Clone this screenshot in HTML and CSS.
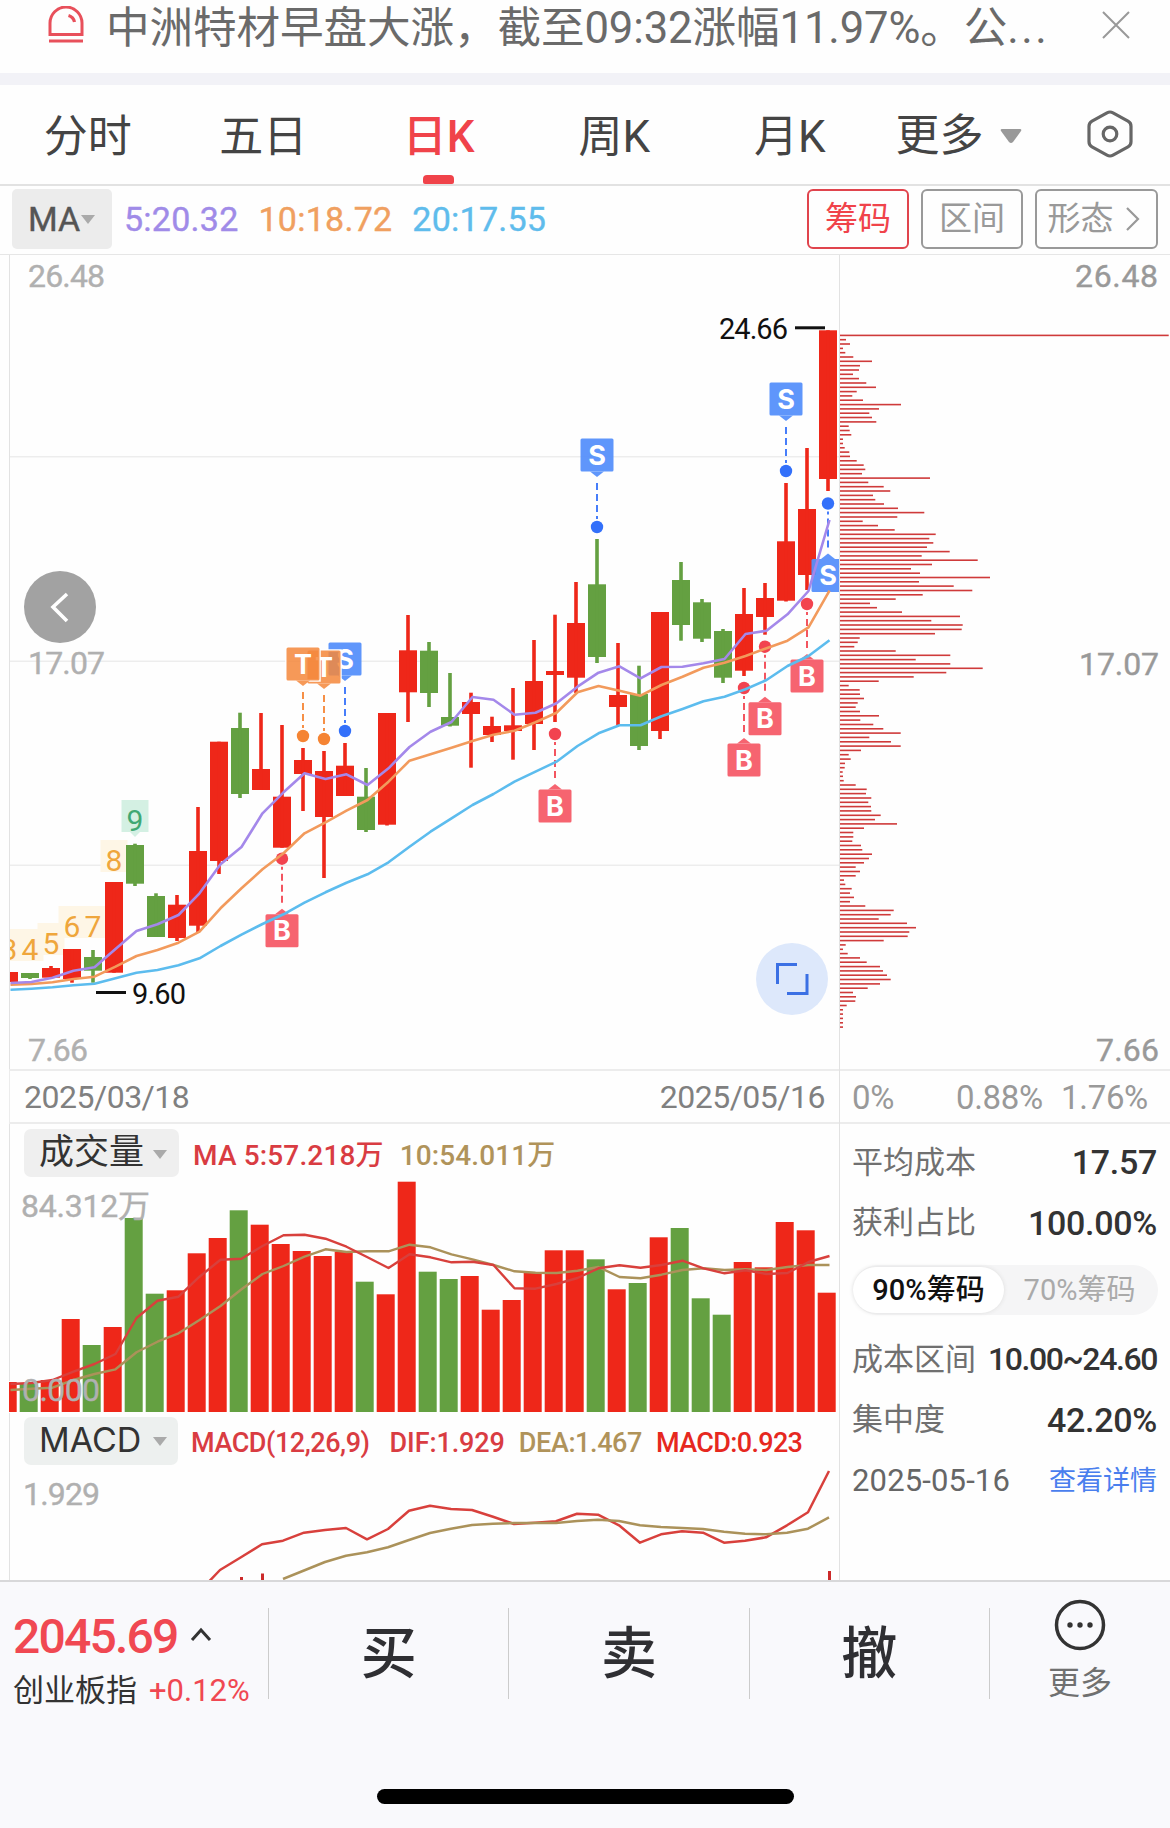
FILE: index.html
```html
<!DOCTYPE html>
<html lang="zh-CN">
<head>
	<meta charset="utf-8">
	<title>日K</title>
	<link rel="stylesheet" href="styles.css">
</head>
<body>
	<div class="news">
		<svg class="bell" width="36" height="38" viewBox="0 0 36 38">
			<path d="M2 28.5V17a16 16 0 0 1 32 0v11.5z"/>
			<path d="M20.5 9.5q5 1.500 6 6.500" stroke-width="3.200"/>
			<path d="M1 35h34"/>
		</svg>
		<p>中洲特材早盘大涨，截至09:32涨幅11.97%。公<span class="dots">...</span></p>
		<svg class="close" width="28" height="28" viewBox="0 0 28 28"><path d="M1 1l26 26M27 1L1 27"/></svg>
	</div>

	<nav class="tabs">
		<a>分时</a>
		<a>五日</a>
		<a class="active">日K</a>
		<a>周K</a>
		<a>月K</a>
		<a class="more">更多<svg width="22" height="16" viewBox="0 0 22 16"><path d="M2 1h18q2 0 1 2l-8 11q-2 2-4 0L1 3q-1-2 1-2z"/></svg></a>
		<svg class="gear" width="46" height="48" viewBox="0 0 46 48">
			<path d="M20 2.800q3-1.600 6 0l15 8.400q3 1.600 3 5v15.600q0 3.400-3 5l-15 8.400q-3 1.600-6 0l-15-8.400q-3-1.600-3-5V16.200q0-3.400 3-5z"/>
			<circle cx="23" cy="24" r="6.800"/>
		</svg>
	</nav>

	<div class="mabar">
		<div class="pill small">MA<i class="tri"></i></div>
		<span class="ma5">5:20.32</span>
		<span class="ma10">10:18.72</span>
		<span class="ma20">20:17.55</span>
		<div class="buttons">
			<a class="btn on">筹码</a>
			<a class="btn">区间</a>
			<a class="btn wide">形态<svg width="14" height="24" viewBox="0 0 14 24"><path d="M1 1l11 11L1 23"/></svg></a>
		</div>
	</div>

	<main class="board">
		<section class="left">
			<svg id="kline" width="839" height="815" viewBox="0 254 839 815"></svg>
			<div class="dates"><span>2025/03/18</span><span>2025/05/16</span></div>
			<div class="legend">
				<div class="pill">成交量<i class="tri"></i></div>
				<span class="red">MA 5:57.218万</span>
				<span class="gold">10:54.011万</span>
			</div>
			<svg id="volume" width="839" height="236" viewBox="0 1177 839 236"></svg>
			<div class="legend macd">
				<div class="pill latin">MACD<i class="tri"></i></div>
				<span class="red">MACD(12,26,9)</span>
				<span class="red dif">DIF:1.929</span>
				<span class="gold dea">DEA:1.467</span>
				<span class="bright">MACD:0.923</span>
			</div>
			<svg id="macd" width="839" height="115" viewBox="0 1465 839 115"></svg>
		</section>
		<section class="right">
			<svg id="chips" width="330" height="815" viewBox="840 254 330 815"></svg>
			<div class="percent"><span>0%</span><span>0.88%</span><span>1.76%</span></div>
			<div class="row first"><label>平均成本</label><b>17.57</b></div>
			<div class="row"><label>获利占比</label><b>100.00%</b></div>
			<div class="switch"><span class="on">90%筹码</span><span>70%筹码</span></div>
			<div class="row"><label>成本区间</label><b class="range">10.00~24.60</b></div>
			<div class="row"><label>集中度</label><b>42.20%</b></div>
			<div class="row"><span class="day">2025-05-16</span><a>查看详情</a></div>
		</section>
	</main>

	<footer class="bottom">
		<div class="actions">
			<div class="index">
				<div class="value">2045.69<svg width="22" height="15" viewBox="0 0 22 15"><path d="M2 13l9-10 9 10"/></svg></div>
				<div class="name">创业板指<em>+0.12%</em></div>
			</div>
			<div class="act">买</div>
			<div class="act">卖</div>
			<div class="act">撤</div>
			<div class="other">
				<svg width="52" height="52" viewBox="0 0 52 52">
					<circle class="ring" cx="26" cy="26" r="23.500"/>
					<circle cx="16" cy="26" r="2.700"/><circle cx="26" cy="26" r="2.700"/><circle cx="36" cy="26" r="2.700"/>
				</svg>
				<span>更多</span>
			</div>
		</div>
		<div class="home"></div>
	</footer>
	<script src="chart.js"></script>
</body>
</html>
```
FILE: styles.css
```css
* {box-sizing: border-box;}
body {margin: 0; width: 1170px; height: 1828px; overflow: hidden; background: #fefefe; color: #333; font-family: Roboto, "Noto Sans CJK SC", sans-serif;}
svg {display: block; flex: none;}
p {margin: 0;}

/* news */
.news {height: 85px; border-bottom: 12px solid #f2f2f7; display: flex; align-items: flex-start; padding-left: 48px;}
.news p {margin: 2px 0 0 22px; width: 957px; font-size: 43.600px; line-height: 54px; color: #6a6a6a; white-space: nowrap; letter-spacing: -.100px;}
.dots {letter-spacing: 2.500px;}
.bell {margin-top: 6px; fill: none; stroke: #e8505b; stroke-width: 3;}
.close {margin: 11px 0 0 39px; fill: none; stroke: #999; stroke-width: 2;}

/* tabs */
.tabs {height: 101px; border-bottom: 2px solid #e2e2e2; display: flex;}
.tabs a {width: 175.500px; height: 99px; text-align: center; font-size: 44px; line-height: 104px; color: #444; position: relative;}
.tabs a.active {color: #f0434a; font-weight: 500;}
.tabs a.active:after {content: ""; position: absolute; left: 72px; bottom: 0; width: 31px; height: 9px; border-radius: 4px 4px 2px 2px; background: #f0434a;}
.tabs a.more {width: 209px; padding: 2px 0 0 18px; display: flex; align-items: center; text-align: left;}
.more svg {margin: 1px 0 0 16px; fill: #999;}
.gear {margin-top: 25px; fill: none; stroke: #666; stroke-width: 3.200;}

/* average line bar */
.mabar {height: 68px; display: flex; align-items: center; padding: 0 12px 2px;}
.mabar > span {font-size: 34px; letter-spacing: .250px; margin-right: 20px; white-space: nowrap; -webkit-text-stroke: .400px;}
.pill {width: 155px; height: 48px; padding-left: 15px; background: #efefef; border-radius: 7px; font-size: 35px; line-height: 42px; display: flex; align-items: center; flex: none;}
.pill.small {width: 100px; height: 60px; background: #ececec; margin-right: 12px; padding-left: 16px; font-size: 34px; color: #555; border-radius: 5px; -webkit-text-stroke: .400px;}
.tri {border: 7.500px solid transparent; border-top: 9px solid #aaa; border-bottom: 0; margin-left: 9px;}
.small .tri {margin-left: 1px;}
.ma5 {color: #a08be8;}
.ma10 {color: #f0a060;}
.ma20 {color: #5fbcec;}
.buttons {margin-left: auto; display: flex; gap: 12px;}
.btn {width: 102px; height: 60px; border: 2px solid #999; border-radius: 6px; color: #999; font-size: 33px; line-height: 50px; display: flex; align-items: center; justify-content: center;}
.btn.on {border-color: #e0444d; color: #f0434a;}
.btn.wide {width: 123px; gap: 12px; padding-right: 6px;}
.btn svg {fill: none; stroke: #999; stroke-width: 2.200;}

/* charts */
.board {display: flex; height: 1326px; border-top: 1px solid #e6e6e6; overflow: hidden;}
.left {width: 840px; border-right: 1px solid #e2e2e2; height: 1326px; flex: none;}
.right {width: 330px;}
#kline, #chips {margin-top: -1px;}
.dates {height: 55px; margin-left: 9px; border: 2px solid #ececec; border-width: 2px 0 2px 1px; padding: 0 14px; display: flex; align-items: center; justify-content: space-between; font-size: 32px; letter-spacing: -.500px; color: #808080;}
.percent {height: 55px; border-top: 2px solid #ececec; border-bottom: 2px solid #ececec; padding: 1px 22px 0 12px; display: flex; align-items: center; font-size: 33px; letter-spacing: -.300px; color: #999;}
.percent span:nth-child(2) {margin-left: auto; margin-right: 18px;}
.legend {height: 53px; margin-left: 9px; border-left: 1px solid #e2e2e2; display: flex; align-items: center; padding: 4px 0 0 14px; font-size: 28px; font-weight: 500; white-space: nowrap;}
.legend .pill {margin-right: 14px; font-weight: 400;}
.legend .tri {margin-top: 3px;}
.legend .latin {font: 34px Inter, sans-serif; background: #edf0ef; padding: 0 0 2px 15px; color: #333;}
.latin .tri {margin-left: 12px;}
.red {color: #d93c42; margin-right: 16px; letter-spacing: .150px;}
.gold {color: #b0935a; letter-spacing: .100px;}
.macd {height: 52px; padding-top: 3px; font-size: 27px;}
.macd span {margin-top: 4px;}
.macd .latin {margin-right: 13px; width: 154px;}
.macd .red {letter-spacing: -.450px; margin-right: 20px;}
.macd .red.dif {margin-right: 14px; letter-spacing: -.100px;}
.macd .dea {margin-right: 14px; letter-spacing: -.400px;}
.bright {color: #e6281f; letter-spacing: -.650px;}

/* cost panel */
.row {height: 60.500px; padding: 0 13px 0 12px; display: flex; align-items: center; justify-content: space-between;}
.row.first {margin-top: 8px;}
.row label {font-size: 31px; color: #707070; white-space: nowrap; margin-top: -6px;}
.row b {font-size: 34px; font-weight: 500; letter-spacing: -.300px; color: #333;}
.row b.range {letter-spacing: -1.400px; font-size: 32px;}
.row .day {font-size: 31px; color: #666; letter-spacing: .150px; margin-top: 0;}
.row a {font-size: 27px; color: #4a7fee; margin-top: -3px;}
.switch {width: 305px; height: 50px; margin: 12px 0 14px 13px; border-radius: 25px; background: #f5f5f6; display: flex; align-items: center; justify-content: space-between; padding-right: 3px; font-size: 29px; color: #aaa;}
.switch span {height: 46px; line-height: 47px; width: 152px; text-align: center;}
.switch .on {background: #fff; border-radius: 23px; color: #111; font-weight: 500; box-shadow: 0 0 4px #ddd;}

/* trade bar */
.bottom {height: 248px; border-top: 2px solid #d8d8da; background: #f9f9fc;}
.actions {height: 207px; display: flex; align-items: flex-start;}
.index {width: 268px; padding-left: 13px; margin-top: 27px;}
.value {height: 56px; font-size: 48px; line-height: 56px; letter-spacing: -1.800px; color: #f04852; display: flex; font-weight: 500;}
.value svg {margin: 18px 0 0 13px; fill: none; stroke: #333; stroke-width: 3;}
.name {height: 46px; line-height: 46px; margin-top: 3px; font-size: 31px; white-space: nowrap; color: #333;}
.name em {font-style: normal; margin-left: 12px; color: #f04852;}
.act {width: 240.300px; height: 91px; margin-top: 26px; border-left: 1px solid #ccc; text-align: center; font-size: 56px; line-height: 93px; font-weight: 500; color: #2f2f33;}
.other {width: 181px; height: 91px; margin-top: 26px; border-left: 1px solid #ccc; display: flex; flex-direction: column; align-items: center; font-size: 32px; color: #707070; line-height: 46px;}
.other svg {margin-top: -9px; fill: #333;}
.other span {margin-top: 9px;}
.ring {fill: none; stroke: #333; stroke-width: 3.500;}
.home {width: 417px; height: 15px; margin-left: 377px; border-radius: 8px; background: #000;}

/* svg texts */
.axis {font-size: 32px; fill: #b0b0b0; stroke: #b0b0b0; stroke-width: .400px;}
.axis.dark {fill: #999; stroke: #999;}
.price {font-size: 29px; fill: #111;}
.count {font-size: 30px; fill: #efa63c; text-anchor: middle;}
.mark {font: bold 27px Inter, sans-serif; fill: #fff; text-anchor: middle;}
```
FILE: chart.js
```js
const RED = '#ee2719', GREEN = '#64a041';
const STEP = 21;
const X0 = 9;

// body top, body bottom, wick top, wick bottom, 1 = falling day
var candles = [
	[972,982,972,982,0],[973,978,973,979,1],[968,977.7,966,978.5,0],[949,979,949,982.7,0],[957,970.7,950,982.7,1],
	[882,972.7,882,972.7,0],[845,883.7,843.7,886,1],[896,937,893.3,937,1],[904.7,938,895,941,0],[851,925.7,807,933,0],
	[741.7,861,741.7,874,0],[728,794,712.7,798,1],[769,790,713,790,0],[796.7,847.7,725,847.7,0],[760,774,748,811,0],
	[771,817,751,878,0],[765.7,796,743,796,0],[796.7,830,768,832,1],[713,824.7,713,825.5,0],[650.3,692.3,615,722,0],
	[650.7,693,642,707,1],[717,725.7,673,726.5,1],[702,714,692.7,767.7,0],[726,735,716.7,742,0],[725.3,731,688,759.7,0],
	[681,724,640,750,0],[671,675,614.7,722,0],[623,677.7,582,693,0],[584.3,657,539,663,1],[695,707,643,725,0],
	[694,746,665.7,750,1],[612,731,612,739,0],[580,625,562,640.7,1],[602.3,638.7,599,642,1],[631,677.7,629,683,1],
	[614,670.7,588,676,0],[598,617,583,634.7,0],[541.3,600.7,483,601.5,0],[509,575,448,590,0],[330.3,479,330.3,491,0]
];
var ma5 = [983,982,977.7,970.7,967.3,949,931,924.3,915,893.3,864.3,847,813.3,792.3,773.3,779,774.3,785,768.3,747,731.7,722,697,699.7,714.7,712.7,703.3,686.7,672.7,666.3,678.3,667,666.7,663.3,659,634,630.7,614.3,591,520];
var ma10 = [984.7,984,982.3,979,976.7,966.7,956,950,942.7,931.7,908.3,888.3,869.3,853.3,833.3,822.3,810.7,800,781.7,760.7,754.3,747.7,741,734.7,730.7,722.3,712.7,692.3,686,690.7,695.7,685,676.7,667.7,662.7,656,648.3,640.7,627.3,590.7];
var ma20 = [989.7,988.7,987.3,985.3,983.7,978.3,972.7,970,965.3,958.3,946,934.7,924,914.3,902.7,892.3,882.7,874.3,862.3,846.7,831.7,818.3,805,794,781.7,771.7,761.7,746,733.3,725.3,725.3,716.3,709,701.3,696.7,689.3,680,666,656,640.3];

// day, letter, colour, dot y, direction of the flag (-1 up, 1 down)
var marks = [
	[16,'S','blue',731,-1],[15,'T','orange',739,-1],[14,'T','orange',736,-1],[28,'S','blue',527,-1],[37,'S','blue',471,-1],[39,'S','blue',503.5,1],
	[13,'B','red',858.7,1],[26,'B','red',734,1],[35,'B','red',688,1],[36,'B','red',646.7,1],[38,'B','red',604,1]
];
var colours = {blue:['#5791fb','#3370fa'], orange:['#f5883c','#f58433'], red:['#f65c69','#f2434f']};
var counts = [[0,'3',960],[1,'4',960],[2,'5',954],[3,'6',937],[4,'7',937],[5,'8',871],[6,'9',831]];

var vol = [1382,1383.5,1380,1319,1345,1327,1218,1293.7,1290.3,1253.3,1238,1210.3,1224.7,1244,1251,1256,1251.7,1281.7,1294.3,1181.7,1271.7,1279,1276,1309.7,1300,1272.7,1250.3,1250.3,1259.3,1289.3,1283,1237.3,1228,1298.3,1314.7,1262,1267.3,1222,1230.3,1292.7];
var vma5 = [1384,1383,1380,1371.7,1364,1354,1318,1300.7,1296.7,1276.7,1259.7,1258.7,1246,1235.3,1234.7,1238.7,1246.7,1257.3,1268,1254.3,1257.3,1262.3,1261.7,1265,1288.3,1288.7,1284,1278,1268.3,1265.3,1267.7,1265,1260.7,1268.3,1273.3,1270.3,1274,1273,1262,1256];
var vma10 = [1390,1388.7,1387.7,1380,1374,1369.3,1352.3,1341.7,1333.3,1320,1306,1289.3,1274,1266,1256.7,1249.3,1252,1251.3,1251.3,1244.7,1247.3,1254.3,1259.3,1265,1271.3,1272.7,1273,1270.7,1267,1277,1278.3,1274.7,1270,1268.3,1270,1269.3,1270,1267,1265,1265];

var dif = [1592,1570,1557.3,1544.3,1540.7,1532.7,1530,1528,1539.3,1529,1510.7,1505.7,1509,1510,1516.7,1524,1522.7,1521.3,1513.7,1514.7,1525.3,1542.7,1534.3,1531.3,1532.7,1542.7,1540.7,1537.3,1525.3,1512.3,1471];
var dea = [1579,1570.5,1562,1555.7,1552.3,1547.3,1540,1533,1528.7,1525,1523.7,1523,1523,1523,1521,1519.7,1521,1525.3,1527,1528,1529,1531.7,1533.7,1534.3,1532.7,1528.7,1517.3];

var chips = [986,18,30,9,16,40,96,60,57,39,57,79,108,50,37,69,183,117,88,96,109,26,29,34,9,9,14,28,30,50,71,76,66,270,85,131,151,99,106,132,174,253,172,68,114,164,287,268,280,261,329,245,413,276,213,240,450,237,341,397,248,167,90,111,186,360,274,368,365,285,59,53,43,167,331,227,331,428,319,221,116,26,59,60,72,53,47,60,117,61,100,130,182,88,153,182,63,26,32,15,14,8,9,11,47,80,78,94,85,93,94,122,105,171,72,40,40,37,63,67,96,87,72,47,60,47,12,16,35,30,42,30,76,161,152,116,201,228,208,203,131,17,9,23,60,80,120,129,141,152,120,83,39,48,46,20,9,9,9,9,9];

function rect(x, y, w, h, fill) {
	return `<rect x="${x}" y="${y}" width="${w}" height="${h}" fill="${fill}"/>`;
}
function text(x, y, s, cls, len) {
	return `<text x="${x}" y="${y}" class="${cls}"${len ? ` textLength="${len}"` : ''}>${s}</text>`;
}
function line(values, first, dx, colour, w) {
	var pts = values.map((v, i) => (dx + (first + i) * STEP) + ',' + v).join(' ');
	return `<polyline points="${pts}" fill="none" stroke="${colour}" stroke-width="${w}" stroke-linejoin="round"/>`;
}

function drawKline() {
	var s = '';
	[456.5, 661, 865].forEach(y => s += rect(9, y - .5, 830, 1.5, '#ededed'));
	counts.forEach(c => {
		var x = Math.max(X0 + c[0] * STEP, 11), nine = c[1] == '9';
		s += rect(x - 13.5, c[2] - 31, 27, 32, nine ? '#d4f0e3' : '#fef6e6');
		if (nine) s += `<path d="M${x - 6} ${c[2]}h12l-6 6z" fill="#d4f0e3"/>`;
	});
	counts.forEach(c => {
		var x = X0 + c[0] * STEP;
		s += `<text x="${x}" y="${c[2]}" class="count"${c[1] == '9' ? ' style="fill:#3fa873"' : ''}>${c[1]}</text>`;
	});
	candles.forEach((c, i) => {
		var x = X0 + i * STEP, col = c[4] ? GREEN : RED;
		s += rect(x - 9, c[0], 18, c[1] - c[0], col) + rect(x - 1.8, c[2], 3.6, c[3] - c[2], col);
	});
	marks.forEach(m => {
		var x = X0 + m[0] * STEP, y = m[3], d = m[4], col = colours[m[2]];
		var tip = y + d * 50, edge = y + d * 55.5, top = d > 0 ? edge : edge - 33;
		s += `<path d="M${x} ${tip - d * 6}V${y + d * 8}" stroke="${col[1]}" stroke-width="1.800" stroke-dasharray="7 4"/>`;
		s += `<circle cx="${x}" cy="${y}" r="6.200" fill="${col[1]}"/>`;
		if (m[1] == 'T') s += `<rect x="${x - 16.5}" y="${top}" width="33" height="33" fill="none" stroke="#fff" stroke-width="2.500"/>`;
		s += `<g opacity="${m[1] == 'T' ? .85 : .95}"><path d="M${x - 7} ${edge}L${x} ${tip}L${x + 7} ${edge}z" fill="${col[0]}"/>`;
		s += `<rect x="${x - 16.5}" y="${top}" width="33" height="33" rx="1.500" fill="${col[0]}"/></g>`;
		s += text(x, top + 26, m[1], 'mark');
	});
	s += line(ma20, 0, 10.5, '#5cbcee', 2.6) + line(ma10, 0, 10.5, '#f29a5c', 2.6) + line(ma5, 0, 10.5, '#a488ea', 2.6);
	// left of the axis stays empty
	s += rect(0, 254, 9, 815, '#fefefe') + rect(9, 254, 1, 815, '#e2e2e2');
	s += text(28, 287, '26.48', 'axis', 77) + text(28, 674, '17.07', 'axis', 77) + text(28, 1060.5, '7.66', 'axis', 60);
	s += text(719, 339, '24.66', 'price', 69) + rect(795, 326.3, 30, 3, '#111');
	s += text(132, 1003.5, '9.60', 'price', 54) + rect(96, 991, 30, 3, '#111');
	s += '<circle cx="60" cy="607" r="36" fill="#a2a2a2"/><path d="M67 594L53 607L67 621" fill="none" stroke="#fff" stroke-width="3.600"/>';
	s += '<circle cx="792" cy="979" r="36" fill="#dde8fb"/><path d="M797 964.500H777.500V984M787 993.500H807V974" fill="none" stroke="#3b70e4" stroke-width="3"/>';
	document.getElementById('kline').innerHTML = s;
}

function drawVolume() {
	var s = '';
	vol.forEach((y, i) => s += rect(-1.3 + i * STEP, y, 18, 1412 - y, candles[i][4] ? GREEN : RED));
	s += line(vma10, 0, 10.5, '#ab925a', 2.4) + line(vma5, 0, 10.5, '#d8403c', 2.4);
	s += rect(0, 1177, 9, 236, '#fefefe') + rect(9, 1177, 1, 204, '#e2e2e2');
	s += text(21, 1216.5, '84.312万', 'axis', 129) + text(22, 1401, '0.000', 'axis', 78);
	document.getElementById('volume').innerHTML = s;
}

function drawMacd() {
	var s = line(dif, 9, 10, '#d8403c', 2.5) + line(dea, 13, 10, '#ab925a', 2.5);
	s += rect(240, 1577, 3, 3, '#cc2a2a') + rect(261, 1573.5, 3, 7, '#cc2a2a') + rect(828, 1571, 3, 9, '#cc2a2a');
	s += rect(9, 1465, 1, 115, '#e2e2e2') + text(23, 1505, '1.929', 'axis', 77);
	document.getElementById('macd').innerHTML = s;
}

function drawChips() {
	var s = '';
	chips.forEach((v, i) => s += rect(840, (334.6 + i * 4.323).toFixed(1), (v / 3).toFixed(1), 1.6, '#cf3a3a'));
	s += text(1075, 287, '26.48', 'axis dark', 83) + text(1079, 674.5, '17.07', 'axis dark', 80) + text(1096, 1061, '7.66', 'axis dark', 63);
	document.getElementById('chips').innerHTML = s;
}

drawKline();
drawVolume();
drawMacd();
drawChips();
```
